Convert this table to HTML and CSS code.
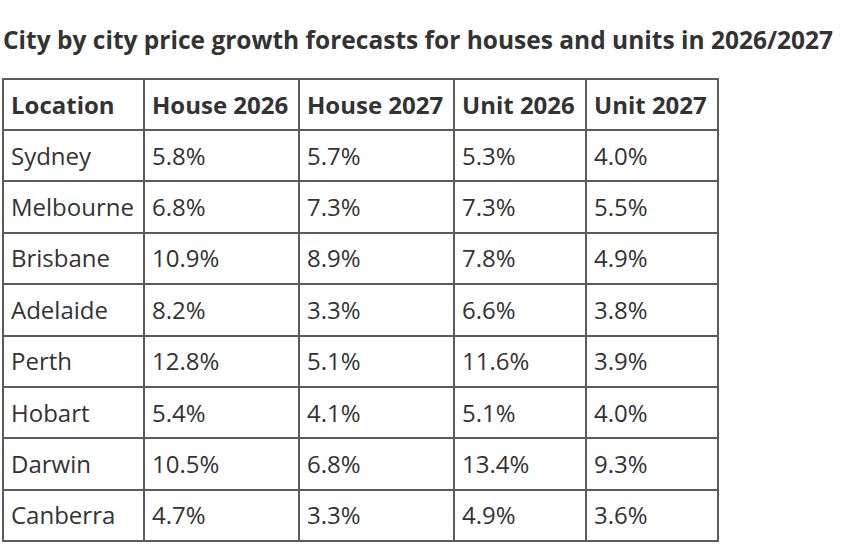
FILE: index.html
```html
<!DOCTYPE html>
<html>
<head>
<meta charset="utf-8">
<link rel="stylesheet" href="styles.css">
</head>
<body>
<h2 class="title">City by city price growth forecasts for houses and units in 2026/2027</h2>
<table class="grid">
<thead>
<tr><th class="c1">Location</th><th class="c2">House 2026</th><th class="c3">House 2027</th><th class="c4">Unit 2026</th><th class="c5">Unit 2027</th></tr>
</thead>
<tbody>
<tr><td>Sydney</td><td>5.8%</td><td>5.7%</td><td>5.3%</td><td>4.0%</td></tr>
<tr><td>Melbourne</td><td>6.8%</td><td>7.3%</td><td>7.3%</td><td>5.5%</td></tr>
<tr><td>Brisbane</td><td>10.9%</td><td>8.9%</td><td>7.8%</td><td>4.9%</td></tr>
<tr><td>Adelaide</td><td>8.2%</td><td>3.3%</td><td>6.6%</td><td>3.8%</td></tr>
<tr><td>Perth</td><td>12.8%</td><td>5.1%</td><td>11.6%</td><td>3.9%</td></tr>
<tr><td>Hobart</td><td>5.4%</td><td>4.1%</td><td>5.1%</td><td>4.0%</td></tr>
<tr><td>Darwin</td><td>10.5%</td><td>6.8%</td><td>13.4%</td><td>9.3%</td></tr>
<tr><td>Canberra</td><td>4.7%</td><td>3.3%</td><td>4.9%</td><td>3.6%</td></tr>
</tbody>
</table>
</body>
</html>
```
FILE: styles.css
```css
html, body {
  margin: 0;
  padding: 0;
  background: #fff;
}
body {
  font-family: "Open Sans", "Liberation Sans", sans-serif;
  color: #333;
  padding: 23px 0 0 2px;
}
.title {
  margin: 0 0 21px 1px;
  font-size: 24.5px;
  font-weight: 700;
  line-height: 34px;
  color: #333;
  white-space: nowrap;
}
.grid {
  border-collapse: collapse;
}
.grid th, .grid td {
  border: 2px solid #5b5b5b;
  padding: 0 6px 0 7px;
  height: 49.4px;
  font-size: 24px;
  line-height: 30px;
  text-align: left;
  vertical-align: middle;
  white-space: nowrap;
}
.grid th {
  font-weight: 700;
  height: 49px;
}
.grid td {
  font-weight: 400;
}
.c1 { width: 126px; }
.c2 { width: 140px; }
.c3 { width: 140px; }
.c4 { width: 117px; }
.c5 { width: 117px; }
```
